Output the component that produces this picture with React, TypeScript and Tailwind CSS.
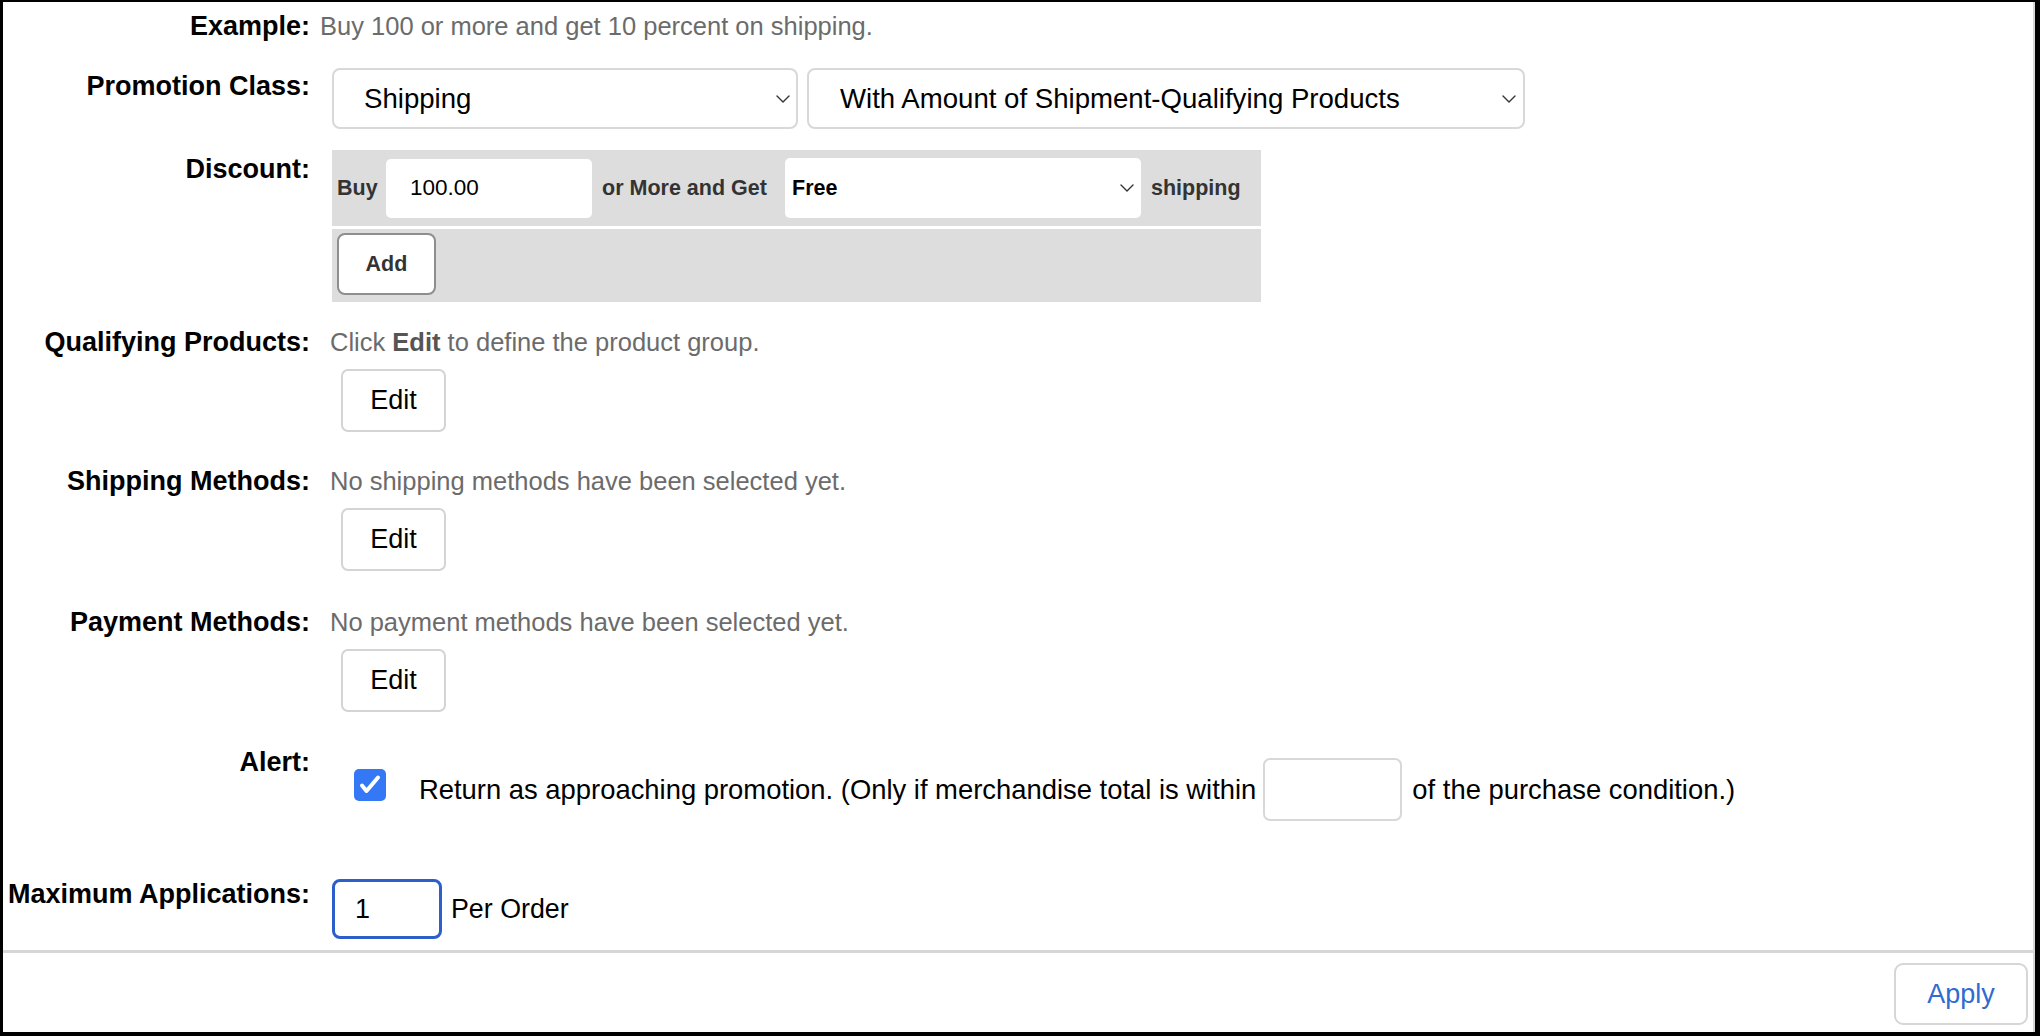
import React from 'react'
import clsx from 'clsx'

// small down arrow used by the select boxes
const Chevron = ({ className }: { className?: string }) => (
  <svg
    viewBox="0 0 14 8"
    className={clsx('h-[8px] w-[14px] shrink-0 text-[#333]', className)}
    fill="none"
    stroke="currentColor"
    strokeWidth={1.4}
    strokeLinecap="round"
    strokeLinejoin="round"
  >
    <path d="M1 1l6 6 6-6" />
  </svg>
)

const Label = ({ children, className }: { children: React.ReactNode; className?: string }) => (
  <div
    className={clsx(
      'w-[307px] shrink-0 text-right text-[27px] font-bold leading-[30px] text-black',
      className
    )}
  >
    {children}
  </div>
)

const EditButton = () => (
  <button
    type="button"
    className="ml-[11px] mt-[12px] flex h-[63px] w-[105px] items-center justify-center rounded-[7px] border-2 border-[#d4d4d4] bg-white text-[27px] text-black"
  >
    Edit
  </button>
)

const Hint = ({ children }: { children: React.ReactNode }) => (
  <div className="text-[25.5px] leading-[30px] text-[#6b6b6b]">{children}</div>
)

export default function App() {
  return (
    <div className="h-[1036px] w-[2040px] border-b-4 border-l-[3px] border-r-[5px] border-t-2 border-black bg-white font-['Liberation_Sans',Arial,sans-serif]">
      <div className="flex h-full flex-col border-r-2 border-[#d6d6d6]">
        <div className="flex-1 pt-[9px]">
          {/* Example */}
          <div className="flex items-start">
            <Label>Example:</Label>
            <div className="pl-[10px]">
              <Hint>Buy 100 or more and get 10 percent on shipping.</Hint>
            </div>
          </div>

          {/* Promotion class */}
          <div className="mt-[27px] flex items-start">
            <Label className="pt-[3px]">Promotion Class:</Label>
            <div className="flex pl-[22px] text-[27.6px] text-black">
              <div className="flex h-[61px] w-[466px] items-center justify-between rounded-[8px] border-2 border-[#d8d8d8] bg-white pl-[30px] pr-[6px]">
                <span>Shipping</span>
                <Chevron />
              </div>
              <div className="ml-[9px] flex h-[61px] w-[718px] items-center justify-between rounded-[8px] border-2 border-[#d8d8d8] bg-white pl-[31px] pr-[7px]">
                <span>With Amount of Shipment-Qualifying Products</span>
                <Chevron />
              </div>
            </div>
          </div>

          {/* Discount */}
          <div className="mt-[21px] flex items-start">
            <Label className="pt-[4px]">Discount:</Label>
            <div className="pl-[22px]">
              <div className="w-[929px] bg-[#dddddd] text-[21.5px] font-bold text-[#333]">
                <div className="flex h-[76px] items-center">
                  <span className="w-[54px] pl-[5px]">Buy</span>
                  <div className="flex h-[59px] w-[206px] items-center rounded-[5px] bg-white pl-[24px] text-[22.5px] font-normal text-black">
                    100.00
                  </div>
                  <span className="w-[193px] pl-[10px]">or More and Get</span>
                  <div className="flex h-[60px] w-[356px] items-center justify-between rounded-[5px] bg-white pl-[7px] pr-[7px] text-black">
                    <span>Free</span>
                    <Chevron />
                  </div>
                  <span className="pl-[10px]">shipping</span>
                </div>
                <div className="h-[3px] bg-white" />
                <div className="h-[73px] pl-[5px] pt-[4px]">
                  <button
                    type="button"
                    className="flex h-[62px] w-[99px] items-center justify-center rounded-[8px] border-2 border-[#8e8e8e] bg-white text-[21.5px] font-bold text-[#333]"
                  >
                    Add
                  </button>
                </div>
              </div>
            </div>
          </div>

          {/* Qualifying products */}
          <div className="mt-[25px] flex items-start">
            <Label>Qualifying Products:</Label>
            <div className="pl-[20px]">
              <Hint>
                Click <span className="font-bold text-[#555]">Edit</span> to define the product group.
              </Hint>
              <EditButton />
            </div>
          </div>

          {/* Shipping methods */}
          <div className="mt-[34px] flex items-start">
            <Label>Shipping Methods:</Label>
            <div className="pl-[20px]">
              <Hint>No shipping methods have been selected yet.</Hint>
              <EditButton />
            </div>
          </div>

          {/* Payment methods */}
          <div className="mt-[36px] flex items-start">
            <Label>Payment Methods:</Label>
            <div className="pl-[20px]">
              <Hint>No payment methods have been selected yet.</Hint>
              <EditButton />
            </div>
          </div>

          {/* Alert */}
          <div className="mt-[35px] flex items-start">
            <Label>Alert:</Label>
            <div className="mt-[11px] flex h-[63px] items-center pl-[20px] text-[27.4px] text-black">
              <div className="ml-[24px] mt-[11px] flex h-[32px] w-[32px] shrink-0 items-center justify-center self-start rounded-[5px] bg-[#3478f6]">
                <svg viewBox="0 0 32 32" className="h-[32px] w-[32px]" fill="none" stroke="white" strokeWidth={4} strokeLinecap="round" strokeLinejoin="round">
                  <path d="M8 16.5l4.5 5.5L24 8.5" />
                </svg>
              </div>
              <span className="ml-[33px]">
                Return as approaching promotion. (Only if merchandise total is within
              </span>
              <div className="ml-[7px] h-[63px] w-[139px] shrink-0 rounded-[7px] border-2 border-[#d8d8d8] bg-white" />
              <span className="ml-[10px]">of the purchase condition.)</span>
            </div>
          </div>

          {/* Maximum applications */}
          <div className="mt-[58px] flex items-start">
            <Label>Maximum Applications:</Label>
            <div className="flex items-center pl-[22px] text-[26.8px] text-black">
              <div className="flex h-[60px] w-[110px] items-center rounded-[8px] border-[3px] border-[#2c5fca] bg-white pl-[20px] text-[27px]">
                1
              </div>
              <span className="ml-[9px]">Per Order</span>
            </div>
          </div>
        </div>

        {/* footer */}
        <div className="flex justify-end border-t-[3px] border-[#d6d6d6] pb-[7px] pr-[5px] pt-[10px]">
          <button
            type="button"
            className="flex h-[62px] w-[134px] items-center justify-center rounded-[9px] border-2 border-[#d6d6d6] bg-white text-[27px] text-[#2f6bd0]"
          >
            Apply
          </button>
        </div>
      </div>
    </div>
  )
}
